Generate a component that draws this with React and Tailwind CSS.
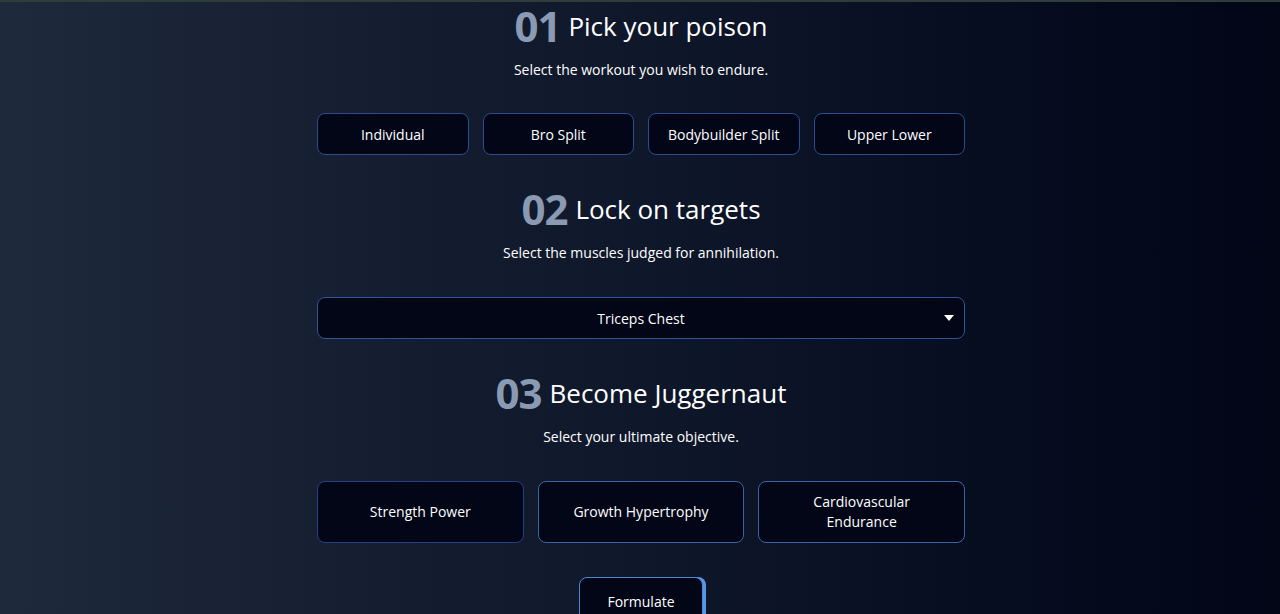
const workouts = ['Individual', 'Bro Split', 'Bodybuilder Split', 'Upper Lower'];
const goals = ['Strength Power', 'Growth Hypertrophy', 'Cardiovascular Endurance'];

const SectionTitle = ({ num, title, sub }) => (
  <div className="flex flex-col items-center">
    <div className="h-[48px] flex items-center gap-[8px]">
      <span className="text-[42px] font-bold text-[#8a9ab2] tracking-tight leading-[48px]">{num}</span>
      <span className="text-[26px] text-white leading-[36px]">{title}</span>
    </div>
    <p className="mt-[10px] h-[20px] leading-[20px] text-[14px] text-white">{sub}</p>
  </div>
);

const App = () => {
  return (
    <div
      className="h-[614px] overflow-hidden bg-linear-to-r from-[#1e293b] via-[#0f172a] to-[#020617] text-white"
      style={{ fontFamily: '"Open Sans", "DejaVu Sans", sans-serif' }}
    >
      <div className="h-[2px] bg-[#2e3d3b]"></div>

      <div className="w-[648px] mx-auto translate-x-[1px] flex flex-col">
        {/* 01 */}
        <SectionTitle num="01" title="Pick your poison" sub="Select the workout you wish to endure." />
        <div className="mt-[33px] grid grid-cols-4 gap-[14px]">
          {workouts.map((w) => (
            <button
              key={w}
              className="h-[42px] rounded-lg border border-[#2c4c8e] bg-[#020617] text-[14px] text-white"
            >
              {w}
            </button>
          ))}
        </div>

        {/* 02 */}
        <div className="mt-[30px]">
          <SectionTitle num="02" title="Lock on targets" sub="Select the muscles judged for annihilation." />
        </div>
        <div className="mt-[34px] h-[42px] rounded-lg border border-[#2f5596] bg-[#020617] relative flex items-center justify-center">
          <span className="text-[14px] text-white">Triceps Chest</span>
          <svg className="absolute right-[10px] top-1/2 -translate-y-1/2" width="10" height="6" viewBox="0 0 10 6">
            <path d="M0 0 L10 0 L5 6 Z" fill="#ffffff" />
          </svg>
        </div>

        {/* 03 */}
        <div className="mt-[30px]">
          <SectionTitle num="03" title="Become Juggernaut" sub="Select your ultimate objective." />
        </div>
        <div className="mt-[34px] grid grid-cols-3 gap-[14px]">
          {goals.map((g, i) => (
            <button
              key={g}
              className={`h-[62px] rounded-lg border bg-[#020617] text-[14px] leading-[20px] text-white px-[28px] ${
                i === 0 ? 'border-[#23408a]' : 'border-[#3d62a4]'
              }`}
            >
              {g}
            </button>
          ))}
        </div>

        <div className="mt-[34px] flex justify-center">
          <button className="w-[124px] h-[50px] rounded-lg border border-[#4f86d4] bg-[#020617] text-[14px] text-white shadow-[3px_0_0_#5a95e6] pb-[2px]">
            Formulate
          </button>
        </div>
      </div>
    </div>
  );
};

export default App;
